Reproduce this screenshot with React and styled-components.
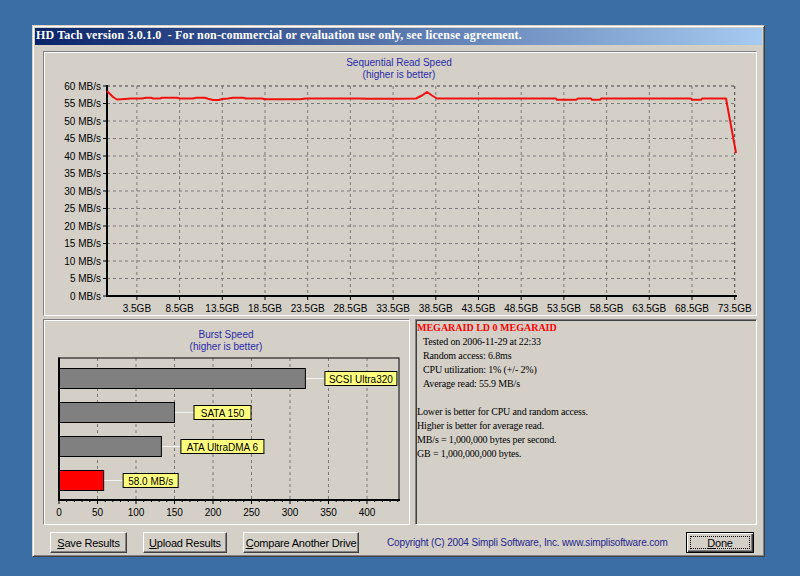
import React from 'react';
import styled, { createGlobalStyle } from 'styled-components';

// --- DATA ---
const GB_TICKS = [3.5, 8.5, 13.5, 18.5, 23.5, 28.5, 33.5, 38.5, 43.5, 48.5, 53.5, 58.5, 63.5, 68.5, 73.5];
const MB_TICKS = [0, 5, 10, 15, 20, 25, 30, 35, 40, 45, 50, 55, 60];
const gx = (gb) => 107 + gb * 8.54;
const gy = (v) => 296 - v * 3.5;

// read curve, page coordinates
const READ = [
  [107, 91], [110, 94], [113, 97], [117, 99.5], [125, 99], [131, 98.5], [142, 98.5], [146, 97.8],
  [151, 97.8], [153, 98.5], [160, 98.5], [162, 97.8], [177, 97.8], [180, 98.5], [193, 98.5],
  [196, 97.8], [205, 97.8], [208, 98.8], [213, 100], [219, 100], [222, 99], [228, 98.5],
  [233, 97.8], [243, 97.8], [246, 98.5], [262, 98.5], [265, 99.2], [300, 99.2], [306, 98.5],
  [360, 98.5], [366, 98.8], [400, 98.8], [416, 98.5], [422, 95.5], [427, 92], [432, 95.5],
  [437, 98.5], [556, 98.5], [557, 99.8], [576, 99.8], [578, 98.5], [591, 98.5], [592, 99.8],
  [600, 99.8], [601, 98.5], [691, 98.5], [692, 99.8], [701, 99.8], [702, 98.5], [726, 98.5],
  [736, 153],
];

const bx = (v) => 59 + v * 0.77;
const BURST_TICKS = [0, 50, 100, 150, 200, 250, 300, 350, 400];
const BURST = [
  { label: 'SCSI Ultra320', value: 320, y: 368, w: 72 },
  { label: 'SATA 150', value: 150, y: 402, w: 57 },
  { label: 'ATA UltraDMA 6', value: 133, y: 436, w: 83 },
  { label: '58.0 MB/s', value: 58, y: 470, w: 55, mine: true },
];

// --- STYLES ---
const GlobalStyle = createGlobalStyle`
  html, body { margin: 0; padding: 0; background: #3a6ea5; }
  body { width: 800px; height: 576px; overflow: hidden; font-family: "Liberation Sans", Arial, sans-serif; }
`;

const Desktop = styled.div`
  width: 800px;
  height: 576px;
  box-sizing: border-box;
  padding: 25px 0 0 32px;
`;

const Window = styled.div`
  width: 733px;
  box-sizing: border-box;
  background: #d4d0c8;
  border: 1px solid;
  border-color: #d4d0c8 #404040 #404040 #d4d0c8;
  box-shadow: inset 1px 1px #fff, inset -1px -1px #808080;
  padding: 2px;
`;

const TitleBar = styled.div`
  height: 17px;
  line-height: 17px;
  padding-left: 1px;
  background: linear-gradient(to right, #0a246a, #a6caf0);
  color: #fff;
  font: bold 12px "Liberation Serif", "Times New Roman", serif;
  letter-spacing: 0.15px;
  white-space: pre;
`;

const Body = styled.div`
  padding: 6px 5px 1px 8px;
`;

const Etched = styled.div`
  box-sizing: border-box;
  border: 1px solid;
  border-color: #808080 #fff #fff #808080;
  box-shadow: inset 1px 1px #fff;
`;

const GraphPanel = styled(Etched)`
  height: 265px;
`;

const LowerRow = styled.div`
  display: flex;
  gap: 5px;
  margin-top: 3px;
  height: 206px;
`;

const BurstPanel = styled(Etched)`
  width: 367px;
`;

const InfoPanel = styled.div`
  flex: 1;
  box-sizing: border-box;
  border: 1px solid;
  border-color: #808080 #fff #fff #808080;
  box-shadow: inset 1px 1px #404040, inset -1px -1px #d4d0c8;
  padding: 1px 0 0 1px;
  font: 10px "Liberation Serif", "Times New Roman", serif;
  letter-spacing: -0.15px;
  line-height: 14px;
  color: #000;
`;

const InfoLine = styled.div`
  height: 14px;
  white-space: pre;
  padding-left: ${(p) => (p.$indent ? '6px' : '0')};
`;

const DriveName = styled(InfoLine)`
  color: #ff0000;
  font-weight: bold;
  letter-spacing: 0;
`;

const ButtonRow = styled.div`
  display: flex;
  align-items: center;
  gap: 16px;
  height: 21px;
  margin-top: 7px;
  padding: 0 3px 0 7px;
`;

const Button = styled.button`
  flex-shrink: 0;
  width: ${(p) => p.$w}px;
  height: 21px;
  box-sizing: border-box;
  padding: 0;
  background: #d4d0c8;
  color: #000;
  font: 11px "Liberation Sans", Arial, sans-serif;
  letter-spacing: -0.2px;
  border: 1px solid;
  border-color: #fff #404040 #404040 #fff;
  box-shadow: inset -1px -1px #808080;
  cursor: default;
  u { text-decoration: underline; }
`;

const DefaultButton = styled(Button)`
  margin-left: auto;
  border-color: #000;
  box-shadow: inset 1px 1px #fff, inset -1px -1px #404040, inset -2px -2px #808080;
  outline: 1px dotted #000;
  outline-offset: -5px;
`;

const Copyright = styled.span`
  flex-shrink: 0;
  margin-left: 12px;
  color: #24248c;
  font-size: 10px;
  letter-spacing: -0.15px;
  white-space: nowrap;
`;

const ChartSvg = styled.svg`
  display: block;
`;

const AxisText = styled.text`
  font: 10px "Liberation Sans", Arial, sans-serif;
  fill: #000;
`;

const ChartTitle = styled.text`
  font: 10px "Liberation Sans", Arial, sans-serif;
  fill: #2b2ba6;
  text-anchor: middle;
`;

// --- CHARTS ---
const ReadGraph = () => (
  <ChartSvg width="712" height="263" viewBox="44 52 712 263">
    <ChartTitle x="399" y="66">Sequential Read Speed</ChartTitle>
    <ChartTitle x="399" y="78">(higher is better)</ChartTitle>

    {MB_TICKS.map((v) => (
      <g key={v}>
        {v > 0 && (
          <line x1="107" x2="736" y1={gy(v)} y2={gy(v)}
            stroke={v === 60 ? '#404040' : '#7a7a7a'} strokeDasharray="3 3" />
        )}
        <line x1="103" x2="107" y1={gy(v)} y2={gy(v)} stroke="#000" />
        <AxisText x="101" y={gy(v) + 3.5} textAnchor="end">{v} MB/s</AxisText>
      </g>
    ))}

    {GB_TICKS.map((gb) => (
      <g key={gb}>
        <line x1={gx(gb)} x2={gx(gb)} y1="86" y2="296"
          stroke={gb === 73.5 ? '#404040' : '#7a7a7a'} strokeDasharray="3 3" />
        <line x1={gx(gb)} x2={gx(gb)} y1="296" y2="300" stroke="#000" />
        <AxisText x={gx(gb)} y="312" textAnchor="middle">{gb}GB</AxisText>
      </g>
    ))}

    <line x1="107" x2="107" y1="85" y2="297" stroke="#000" strokeWidth="2" />
    <line x1="106" x2="737" y1="296" y2="296" stroke="#000" strokeWidth="2" />

    <polyline points={READ.map((p) => p.join(',')).join(' ')}
      fill="none" stroke="#f01010" strokeWidth="2" strokeLinejoin="round" />
  </ChartSvg>
);

const BurstGraph = () => (
  <ChartSvg width="365" height="204" viewBox="44 320 365 204">
    <ChartTitle x="226" y="338">Burst Speed</ChartTitle>
    <ChartTitle x="226" y="350">(higher is better)</ChartTitle>

    {BURST_TICKS.slice(1).map((v) => (
      <line key={v} x1={bx(v)} x2={bx(v)} y1="358" y2="500" stroke="#7a7a7a" strokeDasharray="3 3" />
    ))}
    {Array.from({ length: 45 }, (_, i) => i * 10).map((v) => (
      <line key={v} x1={bx(v)} x2={bx(v)} y1="500" y2={v % 50 === 0 ? 504 : 502} stroke="#000" />
    ))}
    {BURST_TICKS.map((v) => (
      <AxisText key={v} x={bx(v)} y="516" textAnchor="middle">{v}</AxisText>
    ))}

    <rect x="59" y="358" width="340" height="142" fill="none" stroke="#000" />
    <line x1="59" x2="59" y1="357.5" y2="501" stroke="#000" strokeWidth="2" />
    <line x1="58" x2="400" y1="500" y2="500" stroke="#000" strokeWidth="2" />

    {BURST.map((b) => {
      const end = bx(b.value);
      const lx = end + 19;
      return (
        <g key={b.label}>
          <line x1={end} x2={lx} y1={b.y + 10.5} y2={b.y + 10.5} stroke="#f4f4f4" />
          <rect x="59.5" y={b.y + 0.5} width={end - 59.5} height="20"
            fill={b.mine ? '#ff0000' : '#808080'} stroke="#000" />
          <rect x={lx + 0.5} y={b.y + 3.5} width={b.w} height="14" fill="#ffff80" stroke="#000" />
          <AxisText x={lx + 0.5 + b.w / 2} y={b.y + 14.5} textAnchor="middle">{b.label}</AxisText>
        </g>
      );
    })}
  </ChartSvg>
);

// --- APP ---
const App = () => (
  <>
    <GlobalStyle />
    <Desktop>
      <Window>
        <TitleBar>HD Tach version 3.0.1.0  - For non-commercial or evaluation use only, see license agreement.</TitleBar>
        <Body>
          <GraphPanel>
            <ReadGraph />
          </GraphPanel>
          <LowerRow>
            <BurstPanel>
              <BurstGraph />
            </BurstPanel>
            <InfoPanel>
              <DriveName>MEGARAID LD 0 MEGARAID</DriveName>
              <InfoLine $indent>Tested on 2006-11-29 at 22:33</InfoLine>
              <InfoLine $indent>Random access: 6.8ms</InfoLine>
              <InfoLine $indent>CPU utilization: 1% (+/- 2%)</InfoLine>
              <InfoLine $indent>Average read: 55.9 MB/s</InfoLine>
              <InfoLine />
              <InfoLine>Lower is better for CPU and random access.</InfoLine>
              <InfoLine>Higher is better for average read.</InfoLine>
              <InfoLine>MB/s = 1,000,000 bytes per second.</InfoLine>
              <InfoLine>GB = 1,000,000,000 bytes.</InfoLine>
            </InfoPanel>
          </LowerRow>
          <ButtonRow>
            <Button $w={77}><u>S</u>ave Results</Button>
            <Button $w={84}><u>U</u>pload Results</Button>
            <Button $w={116}><u>C</u>ompare Another Drive</Button>
            <Copyright>Copyright (C) 2004 Simpli Software, Inc. www.simplisoftware.com</Copyright>
            <DefaultButton $w={68}><u>D</u>one</DefaultButton>
          </ButtonRow>
        </Body>
      </Window>
    </Desktop>
  </>
);

export default App;
